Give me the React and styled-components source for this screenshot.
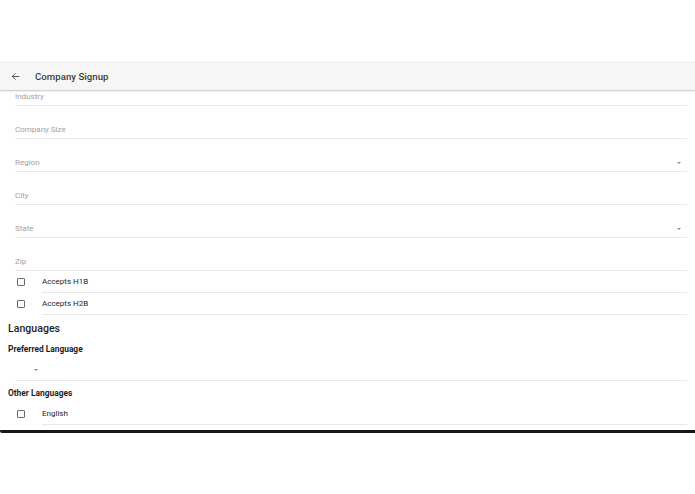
import React, { useLayoutEffect, useRef } from "react";
import styled, { createGlobalStyle } from "styled-components";

const Global = createGlobalStyle`
  html, body { margin: 0; padding: 0; background: #fff; }
  body { font-family: Roboto, "Noto Sans", "Liberation Sans", sans-serif; }
  * { box-sizing: border-box; }
`;

const Frame = styled.div`
  margin-top: 62px;
  height: 371px;
  display: flex;
  flex-direction: column;
  border-bottom: 3px solid #141816;
  border-bottom-left-radius: 2px;
  background: #fff;
`;

const Toolbar = styled.div`
  height: 29px;
  flex: none;
  display: flex;
  align-items: center;
  background: #f6f6f6;
  border-top: 1px solid #ececec;
  border-bottom: 1px solid #d2d2d2;
  box-shadow: 0 1px 1px rgba(0, 0, 0, 0.06);
  padding-left: 11px;
  position: relative;
  z-index: 1;
`;

const BackButton = styled.button`
  border: 0;
  background: none;
  padding: 0;
  width: 9px;
  height: 9px;
  display: flex;
  color: #444;
  margin-right: 15px;
`;

const Title = styled.div`
  font-size: 9.6px;
  font-weight: 500;
  color: #3c3c3c;
  letter-spacing: 0.05px;
`;

const Content = styled.div`
  flex: 1;
  overflow: hidden;
  padding: 0 8px 0 8px;
`;

const Field = styled.div`
  margin-left: 7px;
  height: 33px;
  padding-top: 17px;
  border-bottom: 1px solid #e8e8e8;
  display: flex;
  align-items: flex-start;
  justify-content: space-between;
`;

const Label = styled.span`
  font-size: 8px;
  line-height: 14px;
  color: #a0a0a0;
`;

const Caret = styled.span`
  width: 0;
  height: 0;
  border-left: 2.5px solid transparent;
  border-right: 2.5px solid transparent;
  border-top: 2.5px solid #8a8a8a;
  margin-top: 6px;
  margin-right: 6px;
`;

const CheckRow = styled.div`
  display: flex;
  align-items: center;
  height: 22px;
  padding-left: 9px;
`;

const Box = styled.span`
  width: 8px;
  height: 8px;
  border: 1px solid #6b6b6b;
  border-radius: 1px;
  flex: none;
  margin-right: 17px;
`;

const CheckText = styled.span`
  flex: 1;
  align-self: stretch;
  display: flex;
  align-items: center;
  font-size: 8px;
  color: #262626;
  border-bottom: 1px solid #e8e8e8;
`;

const Heading = styled.div`
  font-size: 10.6px;
  line-height: 14px;
  font-weight: 500;
  color: #1e1e1e;
  margin-top: 7px;
`;

const SubHeading = styled.div`
  font-size: 8.4px;
  line-height: 12px;
  font-weight: 700;
  color: #1e1e1e;
  margin-top: ${(p) => p.$top}px;
  margin-bottom: ${(p) => p.$bottom || 0}px;
`;

const SelectRow = styled.div`
  margin-left: 7px;
  height: 26px;
  padding-top: 8px;
  padding-left: 19px;
  border-bottom: 1px solid #e8e8e8;
  display: flex;
`;

const BackIcon = () => (
  <svg width="9" height="9" viewBox="0 0 24 24" fill="none" stroke="currentColor" strokeWidth="2.4" strokeLinecap="square">
    <path d="M21 12H4M11 4.5L3.5 12 11 19.5" />
  </svg>
);

const fields = [
  { label: "Industry" },
  { label: "Company Size" },
  { label: "Region", select: true },
  { label: "City" },
  { label: "State", select: true },
  { label: "Zip" },
];

export default function App() {
  const ref = useRef(null);
  useLayoutEffect(() => {
    if (ref.current) ref.current.scrollTop = 18;
  }, []);
  return (
    <>
      <Global />
      <Frame>
        <Toolbar>
          <BackButton aria-label="Back">
            <BackIcon />
          </BackButton>
          <Title>Company Signup</Title>
        </Toolbar>
        <Content ref={ref}>
          {fields.map((f) => (
            <Field key={f.label}>
              <Label>{f.label}</Label>
              {f.select && <Caret />}
            </Field>
          ))}
          <CheckRow>
            <Box />
            <CheckText>Accepts H1B</CheckText>
          </CheckRow>
          <CheckRow>
            <Box />
            <CheckText>Accepts H2B</CheckText>
          </CheckRow>
          <Heading>Languages</Heading>
          <SubHeading $top={7}>Preferred Language</SubHeading>
          <SelectRow>
            <Caret />
          </SelectRow>
          <SubHeading $top={6} $bottom={4}>Other Languages</SubHeading>
          <CheckRow>
            <Box />
            <CheckText>English</CheckText>
          </CheckRow>
          <div style={{ height: 40 }} />
        </Content>
      </Frame>
    </>
  );
}
